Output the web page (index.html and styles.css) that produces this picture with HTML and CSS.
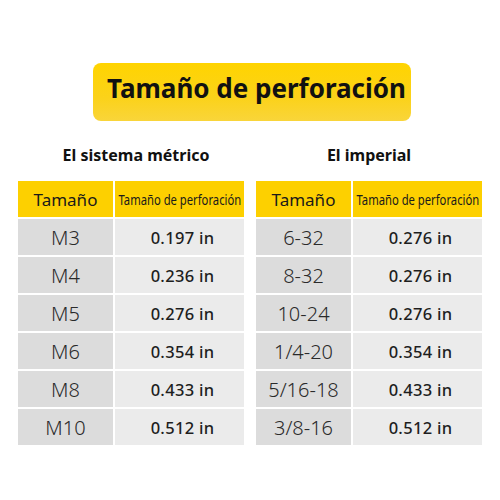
FILE: index.html
```html
<html lang="es">
<head>
    <title>Tamaño de perforación</title>
    <meta name="viewport" content="width=device-width, initial-scale=1">
    <link rel="stylesheet" href="styles.css">
</head>
<body>
    <h1 class="banner">Tamaño de perforación</h1>

    <section class="tables">
        <div class="block">
            <h2 class="metric">El sistema métrico</h2>
            <div class="grid">
                <div class="head size">Tamaño</div>
                <div class="head drill"><span>Tamaño de perforación</span></div>
                <div class="size">M3</div><div class="val">0.197 in</div>
                <div class="size">M4</div><div class="val">0.236 in</div>
                <div class="size">M5</div><div class="val">0.276 in</div>
                <div class="size">M6</div><div class="val">0.354 in</div>
                <div class="size">M8</div><div class="val">0.433 in</div>
                <div class="size">M10</div><div class="val">0.512 in</div>
            </div>
        </div>
        <div class="block">
            <h2>El imperial</h2>
            <div class="grid">
                <div class="head size">Tamaño</div>
                <div class="head drill"><span>Tamaño de perforación</span></div>
                <div class="size">6-32</div><div class="val">0.276 in</div>
                <div class="size">8-32</div><div class="val">0.276 in</div>
                <div class="size">10-24</div><div class="val">0.276 in</div>
                <div class="size">1/4-20</div><div class="val">0.354 in</div>
                <div class="size">5/16-18</div><div class="val">0.433 in</div>
                <div class="size">3/8-16</div><div class="val">0.512 in</div>
            </div>
        </div>
    </section>
</body>
</html>
```

FILE: styles.css
```css
body {
    margin: 0;
    padding-top: 63px;
    background: #fff;
    font-family: "Noto Sans", "Open Sans", sans-serif;
    color: #1a1a1a;
}

.banner {
    width: 318px;
    height: 58px;
    margin: 0 auto 0 93px;
    box-sizing: border-box;
    padding: 0 0 8px 14px;
    display: flex;
    align-items: center;
    white-space: nowrap;
    border-radius: 8px;
    background: linear-gradient(180deg, #ffd400 0%, #fbd21a 60%, #f9d53a 100%);
    font-size: 26px;
    font-weight: 700;
    color: #111;
}

.tables {
    display: grid;
    grid-template-columns: minmax(0, 1fr) minmax(0, 1fr);
    gap: 12px;
    padding: 0 18px;
}

h2 {
    margin: 0;
    height: 60px;
    display: flex;
    align-items: center;
    justify-content: center;
    padding-top: 8px;
    box-sizing: border-box;
    font-size: 16px;
    font-weight: 700;
    color: #111;
}

h2.metric {
    padding-left: 10px;
}

.grid {
    display: grid;
    grid-template-columns: 95px minmax(0, 1fr);
    grid-template-rows: 36px;
    grid-auto-rows: 36px;
    row-gap: 2px;
    column-gap: 2px;
}

.grid div {
    display: flex;
    align-items: center;
    justify-content: center;
    min-width: 0;
}

.size {
    background: #dcdcdc;
    font-size: 20px;
    font-weight: 300;
    color: #2a2a2a;
}

.val {
    background: #ebebeb;
    padding-left: 6px;
    font-size: 16.5px;
    font-weight: 500;
    letter-spacing: 0.3px;
    color: #1e1e1e;
}

.grid .head {
    background: #fdd000;
    color: #1a1a1a;
}

.head.size {
    font-size: 17px;
    font-weight: 400;
}

.head.drill span {
    flex: none;
    white-space: nowrap;
    font-size: 15px;
    transform: scaleX(0.75);
}
```
